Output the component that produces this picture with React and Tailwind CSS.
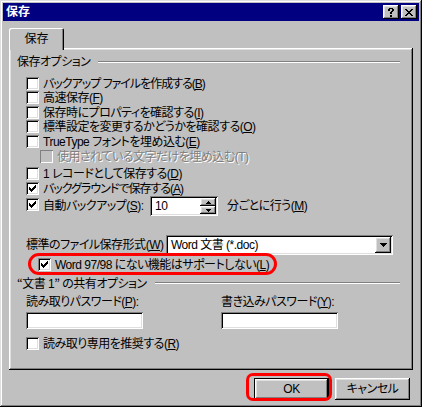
const raised = "shadow-[inset_-1px_-1px_#000,inset_1px_1px_#fff,inset_-2px_-2px_#808080,inset_2px_2px_#dfdfdf]";
const sunken = "shadow-[inset_1px_1px_#808080,inset_-1px_-1px_#fff,inset_2px_2px_#000,inset_-2px_-2px_#dfdfdf]";
const frame = "shadow-[inset_-1px_-1px_#000,inset_1px_1px_#dfdfdf,inset_-2px_-2px_#808080,inset_2px_2px_#fff]";
const panel = "shadow-[inset_-1px_-1px_#000,inset_1px_1px_#fff,inset_-2px_-2px_#808080,inset_2px_2px_#dfdfdf]";

// pixel check mark, 7x7
const CheckMark = () => (
  <svg width="7" height="7" viewBox="0 0 7 7" shapeRendering="crispEdges">
    <path d="M6 0h1v1H6z M5 1h2v1H5z M0 2h1v1H0z M4 2h3v1H4z M0 3h2v1H0z M3 3h3v1H3z M0 4h5v1H0z M1 5h3v1H1z M2 6h1v1H2z" fill="#000" />
  </svg>
);

function Check({ checked, disabled }) {
  return (
    <span
      className={`flex w-[13px] h-[13px] shrink-0 pl-[3px] pt-[3px] ${
        disabled ? "bg-[#c0c0c0] shadow-[inset_1px_1px_#808080,inset_-1px_-1px_#fff]" : `bg-white ${sunken}`
      }`}
    >
      {checked && <CheckMark />}
    </span>
  );
}

function CheckRow({ checked, disabled, className = "", textClass = "", children }) {
  return (
    <div className={`flex items-center h-[13px] ${className}`}>
      <Check checked={checked} disabled={disabled} />
      <span
        className={`ml-[4px] leading-none whitespace-nowrap ${textClass} ${
          disabled ? "text-[#808080] [text-shadow:1px_1px_#fff]" : ""
        }`}
      >
        {children}
      </span>
    </div>
  );
}

function Group({ className = "", children }) {
  return (
    <div className={`flex items-center h-[14px] mr-[5px] ${className}`}>
      <span className="leading-none whitespace-nowrap">{children}</span>
      <div className="flex-1 ml-[8px] h-[2px] border-t border-t-[#808080] border-b border-b-white" />
    </div>
  );
}

const Tri = ({ down }) => (
  <svg width="5" height="3" viewBox="0 0 5 3" shapeRendering="crispEdges">
    <path d={down ? "M0 0h5v1H0z M1 1h3v1H1z M2 2h1v1H2z" : "M2 0h1v1H2z M1 1h3v1H1z M0 2h5v1H0z"} fill="#000" />
  </svg>
);

const TitleButton = ({ children }) => (
  <span className={`w-[16px] h-[14px] flex items-center justify-center bg-[#c0c0c0] ${raised}`}>{children}</span>
);

export default function App() {
  return (
    <div
      className={`w-[422px] h-[407px] p-[3px] flex flex-col bg-[#c0c0c0] ${frame} font-['Liberation_Sans','Noto_Sans_CJK_JP',sans-serif] [font-feature-settings:'palt'] text-[12px] tracking-[-0.5px] text-black`}
    >
      {/* title bar */}
      <div className="h-[18px] shrink-0 flex items-center pl-[3px] pr-[2px] bg-[#000080]">
        <span className="font-bold text-white leading-none tracking-normal">保存</span>
        <div className="ml-auto flex gap-[2px]">
          <TitleButton>
            <svg width="6" height="9" viewBox="0 0 6 9" shapeRendering="crispEdges">
              <path d="M1 0h4v1H1z M0 1h2v2H0z M4 1h2v2H4z M3 3h2v1H3z M2 4h2v2H2z M2 7h2v2H2z" fill="#000" />
            </svg>
          </TitleButton>
          <TitleButton>
            <svg width="8" height="7" viewBox="0 0 8 7" shapeRendering="crispEdges">
              <path d="M0 0h2v1H0z M6 0h2v1H6z M1 1h2v1H1z M5 1h2v1H5z M2 2h4v1H2z M3 3h2v1H3z M2 4h4v1H2z M1 5h2v1H1z M5 5h2v1H5z M0 6h2v1H0z M6 6h2v1H6z" fill="#000" />
            </svg>
          </TitleButton>
        </div>
      </div>

      <div className="px-[6px] pt-[7px]">
        {/* tab */}
        <div className="relative z-10 w-[55px] h-[22px] -mb-[2px] pb-[1px] flex items-center justify-center bg-[#c0c0c0] rounded-t-[2px] tracking-normal shadow-[inset_1px_1px_#fff,inset_-1px_0_#000,inset_-2px_0_#808080]">
          保存
        </div>

        {/* panel */}
        <div className={`h-[322px] flex flex-col px-[8px] pt-[7px] ${panel}`}>
          <Group>保存オプション</Group>

          <CheckRow className="mt-[8px] ml-[9px]" textClass="tracking-[-1px]">
            バックアップ ファイルを作成する(<u>B</u>)
          </CheckRow>
          <CheckRow className="mt-[1px] ml-[9px]">高速保存(<u>F</u>)</CheckRow>
          <CheckRow className="mt-[2px] ml-[9px]">保存時にプロパティを確認する(<u>I</u>)</CheckRow>
          <CheckRow className="mt-[1px] ml-[9px]">標準設定を変更するかどうかを確認する(<u>O</u>)</CheckRow>
          <CheckRow className="mt-[2px] ml-[9px]">TrueType フォントを埋め込む(<u>E</u>)</CheckRow>
          <CheckRow disabled className="mt-[2px] ml-[23px]">使用されている文字だけを埋め込む(T)</CheckRow>
          <CheckRow className="mt-[4px] ml-[9px]">1 レコードとして保存する(<u>D</u>)</CheckRow>
          <CheckRow checked className="mt-[2px] ml-[9px]" textClass="tracking-[-1px]">
            バックグラウンドで保存する(<u>A</u>)
          </CheckRow>

          {/* auto backup */}
          <div className="mt-[1px] ml-[9px] flex items-center h-[20px]">
            <span className="self-start mt-[2px]">
              <Check checked />
            </span>
            <span className="ml-[4px] w-[107px] leading-none whitespace-nowrap">自動バックアップ(<u>S</u>):</span>
            <div className={`w-[68px] h-[20px] p-[2px] flex bg-white ${sunken}`}>
              <span className="flex-1 pl-[3px] leading-[16px]">10</span>
              <div className="w-[16px] flex flex-col">
                <span className={`h-[8px] flex items-center justify-center bg-[#c0c0c0] ${raised}`}>
                  <Tri />
                </span>
                <span className={`h-[8px] flex items-center justify-center bg-[#c0c0c0] ${raised}`}>
                  <Tri down />
                </span>
              </div>
            </div>
            <span className="ml-[9px] leading-none whitespace-nowrap">分ごとに行う(<u>M</u>)</span>
          </div>

          {/* default format */}
          <div className="mt-[19px] ml-[9px] flex items-center h-[20px]">
            <span className="w-[140px] leading-none whitespace-nowrap">標準のファイル保存形式(<u>W</u>)</span>
            <div className={`w-[227px] h-[20px] p-[2px] flex bg-white ${sunken}`}>
              <span className="flex-1 pl-[3px] leading-[16px] whitespace-nowrap">Word 文書 (*.doc)</span>
              <span className={`w-[16px] h-[16px] flex items-center justify-center bg-[#c0c0c0] ${raised}`}>
                <svg width="7" height="4" viewBox="0 0 7 4" shapeRendering="crispEdges">
                  <path d="M0 0h7v1H0z M1 1h5v1H1z M2 2h3v1H2z M3 3h1v1H3z" fill="#000" />
                </svg>
              </span>
            </div>
          </div>

          <div className="mt-[3px] ml-[21px] self-start relative flex items-center h-[13px]">
            <span className="absolute -left-[10px] -right-[8px] -top-[5px] -bottom-[4px] rounded-full border-[3px] border-[#ff0000]" />
            <Check checked />
            <span className="ml-[4px] leading-none whitespace-nowrap">
              Word 97/98 にない機能はサポートしない(<u>L</u>)
            </span>
          </div>

          <Group className="mt-[5px]">
            <span className="font-['Noto_Sans_CJK_JP',sans-serif]">“</span>文書 1
            <span className="font-['Noto_Sans_CJK_JP',sans-serif]">”</span> の共有オプション
          </Group>

          <div className="mt-[5px] ml-[9px] grid grid-cols-[195px_1fr] h-[14px] items-center">
            <span className="leading-none whitespace-nowrap">読み取りパスワード(<u>P</u>):</span>
            <span className="leading-none whitespace-nowrap">書き込みパスワード(<u>Y</u>):</span>
          </div>
          <div className="mt-[3px] ml-[9px] grid grid-cols-[195px_1fr]">
            <div className={`w-[117px] h-[17px] bg-white ${sunken}`} />
            <div className={`w-[117px] h-[17px] bg-white ${sunken}`} />
          </div>

          <CheckRow className="mt-[8px] ml-[9px]">読み取り専用を推奨する(<u>R</u>)</CheckRow>
        </div>
      </div>

      {/* buttons */}
      <div className="mt-[8px] flex justify-end gap-[6px] pr-[9px]">
        <div className="relative">
          <span className="absolute -left-[8px] -right-[3px] -top-[5px] -bottom-[1px] rounded-[7px] border-[3px] border-[#ff0000]" />
          <span className="w-[75px] h-[22px] flex items-center justify-center bg-[#c0c0c0] leading-none shadow-[inset_0_0_0_1px_#000,inset_-2px_-2px_#000,inset_2px_2px_#fff,inset_-3px_-3px_#808080,inset_3px_3px_#dfdfdf]">
            OK
          </span>
        </div>
        <span className={`w-[75px] h-[22px] flex items-center justify-center bg-[#c0c0c0] leading-none ${raised}`}>
          キャンセル
        </span>
      </div>
    </div>
  );
}
